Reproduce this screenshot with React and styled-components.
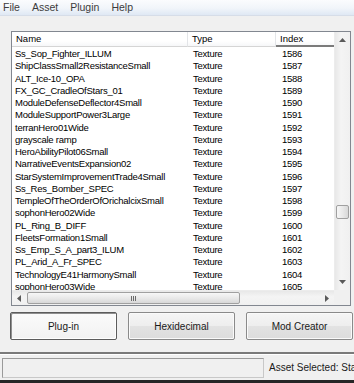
import React from "react"
import styled, { createGlobalStyle, css } from "styled-components"

const GlobalStyle = createGlobalStyle`
    html, body {
        margin: 0;
        padding: 0;
        background: #f0f0f0;
        overflow: hidden;
    }
`

const Window = styled.div`
    width: 354px;
    height: 383px;
    display: flex;
    flex-direction: column;
    background: #f0f0f0;
    font-family: "Liberation Sans", Arial, sans-serif;
    color: #000;
    overflow: hidden;
`
const MenuBar = styled.div`
    height: 15px;
    display: flex;
    align-items: center;
    gap: 12px;
    padding-left: 3px;
    background: linear-gradient(#fbfcfe 0%, #f1f5fa 55%, #dfe8f4 100%);
    border-bottom: 1px solid #d6dde8;
    font-size: 10.5px;
    color: #3c3c3c;
`
const MenuItem = styled.span`
    line-height: 15px;
`
const Content = styled.div`
    padding: 15px 0 0 10px;
    display: flex;
    flex-direction: column;
`
const ListBox = styled.div`
    margin-left: 1px;
    width: 340px;
    height: 275px;
    box-sizing: border-box;
    border: 1px solid #828790;
    background: #fff;
    display: grid;
    grid-template-columns: 322px 16px;
    grid-template-rows: 258px 15px;
`
const Table = styled.div`
    overflow: hidden;
    display: flex;
    flex-direction: column;
`
const COLUMNS = "176px 88px 120px"

const HeaderRow = styled.div`
    height: 15px;
    flex-shrink: 0;
    display: grid;
    grid-template-columns: ${COLUMNS};
    background: linear-gradient(#ffffff 0%, #ffffff 60%, #f4f5f7 100%);
    font-size: 9.5px;
`
const HeaderCell = styled.div`
    padding-left: 4px;
    line-height: 14px;
    border-right: 1px solid #e3e5e8;
    border-bottom: 1px solid #d5d5d5;
    ${(p) => p.$active && css`
        border-bottom: 2px solid #7b7b7b;
        line-height: 13px;
    `}
`
const Rows = styled.div`
    flex: 1;
    overflow: hidden;
    padding-top: 1px;
`
const Row = styled.div`
    height: 12.25px;
    display: grid;
    grid-template-columns: ${COLUMNS};
    font-size: 9.5px;
    letter-spacing: -0.25px;
    line-height: 12.25px;
    white-space: nowrap;
`
const Cell = styled.div`
    padding-left: ${(p) => p.$pad}px;
    overflow: hidden;
`
const VScroll = styled.div`
    display: flex;
    flex-direction: column;
    background: linear-gradient(90deg, #e8e8e8, #f4f4f4 40%, #f0f0f0);
    border-left: 1px solid #ececec;
`
const HScroll = styled.div`
    display: flex;
    background: linear-gradient(#e8e8e8, #f4f4f4 40%, #f0f0f0);
    border-top: 1px solid #ececec;
    box-sizing: border-box;
`
const Corner = styled.div`
    background: #f0f0f0;
`
const ArrowButton = styled.div`
    flex-shrink: 0;
    width: ${(p) => (p.$vertical ? "100%" : "14px")};
    height: ${(p) => (p.$vertical ? "16px" : "100%")};
    display: flex;
    align-items: center;
    justify-content: center;
`
const Track = styled.div`
    flex: 1;
    display: flex;
    flex-direction: ${(p) => (p.$vertical ? "column" : "row")};
    align-items: center;
`
const Thumb = styled.div`
    box-sizing: border-box;
    border: 1px solid #a0a0a0;
    border-radius: 2px;
    display: flex;
    align-items: center;
    justify-content: center;
    ${(p) => p.$vertical
        ? css`
            width: 13px;
            height: 14px;
            background: linear-gradient(90deg, #f7f7f7, #e9e9e9 50%, #d8d8d8);
        `
        : css`
            height: 12px;
            background: linear-gradient(#f7f7f7, #e9e9e9 50%, #d8d8d8);
        `}
`
const Grip = styled.div`
    width: 6px;
    height: 5px;
    background: repeating-linear-gradient(90deg, #6b6b6b 0 1px, transparent 1px 2px);
`
const ButtonRow = styled.div`
    margin-top: 6px;
    display: flex;
    gap: 11px;
`
const Button = styled.button`
    width: 107px;
    height: 28px;
    box-sizing: border-box;
    padding: 0;
    border: 1px solid #8a8a8a;
    border-radius: 2px;
    background: linear-gradient(#f5f5f5 0%, #eeeeee 50%, #e3e3e3 51%, #dcdcdc 100%);
    box-shadow: inset 0 0 0 1px #fafafa;
    font-family: "Liberation Sans", Arial, sans-serif;
    font-size: 10px;
    color: #1a1a1a;
    ${(p) => p.$default && css`
        border: 1px solid #5c5c5c;
        background: linear-gradient(#fbfbfb, #f2f2f2);
        box-shadow: inset 1px 1px 0 #8f8f8f, inset -1px -1px 0 #ffffff;
    `}
`
const StatusBar = styled.div`
    margin-top: 12px;
    flex: 1;
    display: flex;
    align-items: flex-start;
    gap: 5px;
    padding: 4px 0 0 2px;
    border-top: 2px solid #7a7a7a;
    border-bottom: 3px solid #262626;
    box-shadow: inset 0 1px 0 #ffffff;
    overflow: hidden;
`
const StatusPanel = styled.div`
    width: 262px;
    height: 20px;
    flex-shrink: 0;
    box-sizing: border-box;
    border: 1px solid #9a9a9a;
    border-right-color: #c8c8c8;
    border-bottom-color: #c8c8c8;
    background: #f0f0f0;
`
const StatusText = styled.div`
    font-size: 10px;
    line-height: 20px;
    white-space: nowrap;
    color: #1a1a1a;
`

const Triangle = ({ dir }) => {
    const points = {
        up: "0,4 3.5,0 7,4",
        down: "0,0 3.5,4 7,0",
        left: "4,0 0,3.5 4,7",
        right: "0,0 4,3.5 0,7",
    }[dir]
    const vertical = dir === "up" || dir === "down"
    return (
        <svg width={vertical ? 7 : 4} height={vertical ? 4 : 7}>
            <polygon points={points} fill="#5a5a5a" />
        </svg>
    )
}

const assets = [
    "Ss_Sop_Fighter_ILLUM",
    "ShipClassSmall2ResistanceSmall",
    "ALT_Ice-10_OPA",
    "FX_GC_CradleOfStars_01",
    "ModuleDefenseDeflector4Small",
    "ModuleSupportPower3Large",
    "terranHero01Wide",
    "grayscale ramp",
    "HeroAbilityPilot06Small",
    "NarrativeEventsExpansion02",
    "StarSystemImprovementTrade4Small",
    "Ss_Res_Bomber_SPEC",
    "TempleOfTheOrderOfOrichalcixSmall",
    "sophonHero02Wide",
    "PL_Ring_B_DIFF",
    "FleetsFormation1Small",
    "Ss_Emp_S_A_part3_ILUM",
    "PL_Arid_A_Fr_SPEC",
    "TechnologyE41HarmonySmall",
    "sophonHero03Wide",
]

const App = () => {
    const firstIndex = 1586
    //scroll state
    const vThumbOffset = 157
    const hThumbWidth = 213

    return (
        <>
            <GlobalStyle />
            <Window>
                <MenuBar>
                    <MenuItem>File</MenuItem>
                    <MenuItem>Asset</MenuItem>
                    <MenuItem>Plugin</MenuItem>
                    <MenuItem>Help</MenuItem>
                </MenuBar>
                <Content>
                    <ListBox>
                        <Table>
                            <HeaderRow>
                                <HeaderCell>Name</HeaderCell>
                                <HeaderCell>Type</HeaderCell>
                                <HeaderCell $active>Index</HeaderCell>
                            </HeaderRow>
                            <Rows>
                                {assets.map((name, i) => (
                                    <Row key={name}>
                                        <Cell $pad={3}>{name}</Cell>
                                        <Cell $pad={5}>Texture</Cell>
                                        <Cell $pad={6}>{firstIndex + i}</Cell>
                                    </Row>
                                ))}
                            </Rows>
                        </Table>
                        <VScroll>
                            <ArrowButton $vertical><Triangle dir="up" /></ArrowButton>
                            <Track $vertical>
                                <Thumb $vertical style={{ marginTop: vThumbOffset }} />
                            </Track>
                            <ArrowButton $vertical><Triangle dir="down" /></ArrowButton>
                        </VScroll>
                        <HScroll>
                            <ArrowButton><Triangle dir="left" /></ArrowButton>
                            <Track>
                                <Thumb style={{ width: hThumbWidth, marginLeft: 1 }}>
                                    <Grip />
                                </Thumb>
                            </Track>
                            <ArrowButton><Triangle dir="right" /></ArrowButton>
                        </HScroll>
                        <Corner />
                    </ListBox>
                    <ButtonRow>
                        <Button $default>Plug-in</Button>
                        <Button>Hexidecimal</Button>
                        <Button>Mod Creator</Button>
                    </ButtonRow>
                </Content>
                <StatusBar>
                    <StatusPanel />
                    <StatusText>Asset Selected: StarSystemImprovementTrade4Small</StatusText>
                </StatusBar>
            </Window>
        </>
    )
}

export default App
